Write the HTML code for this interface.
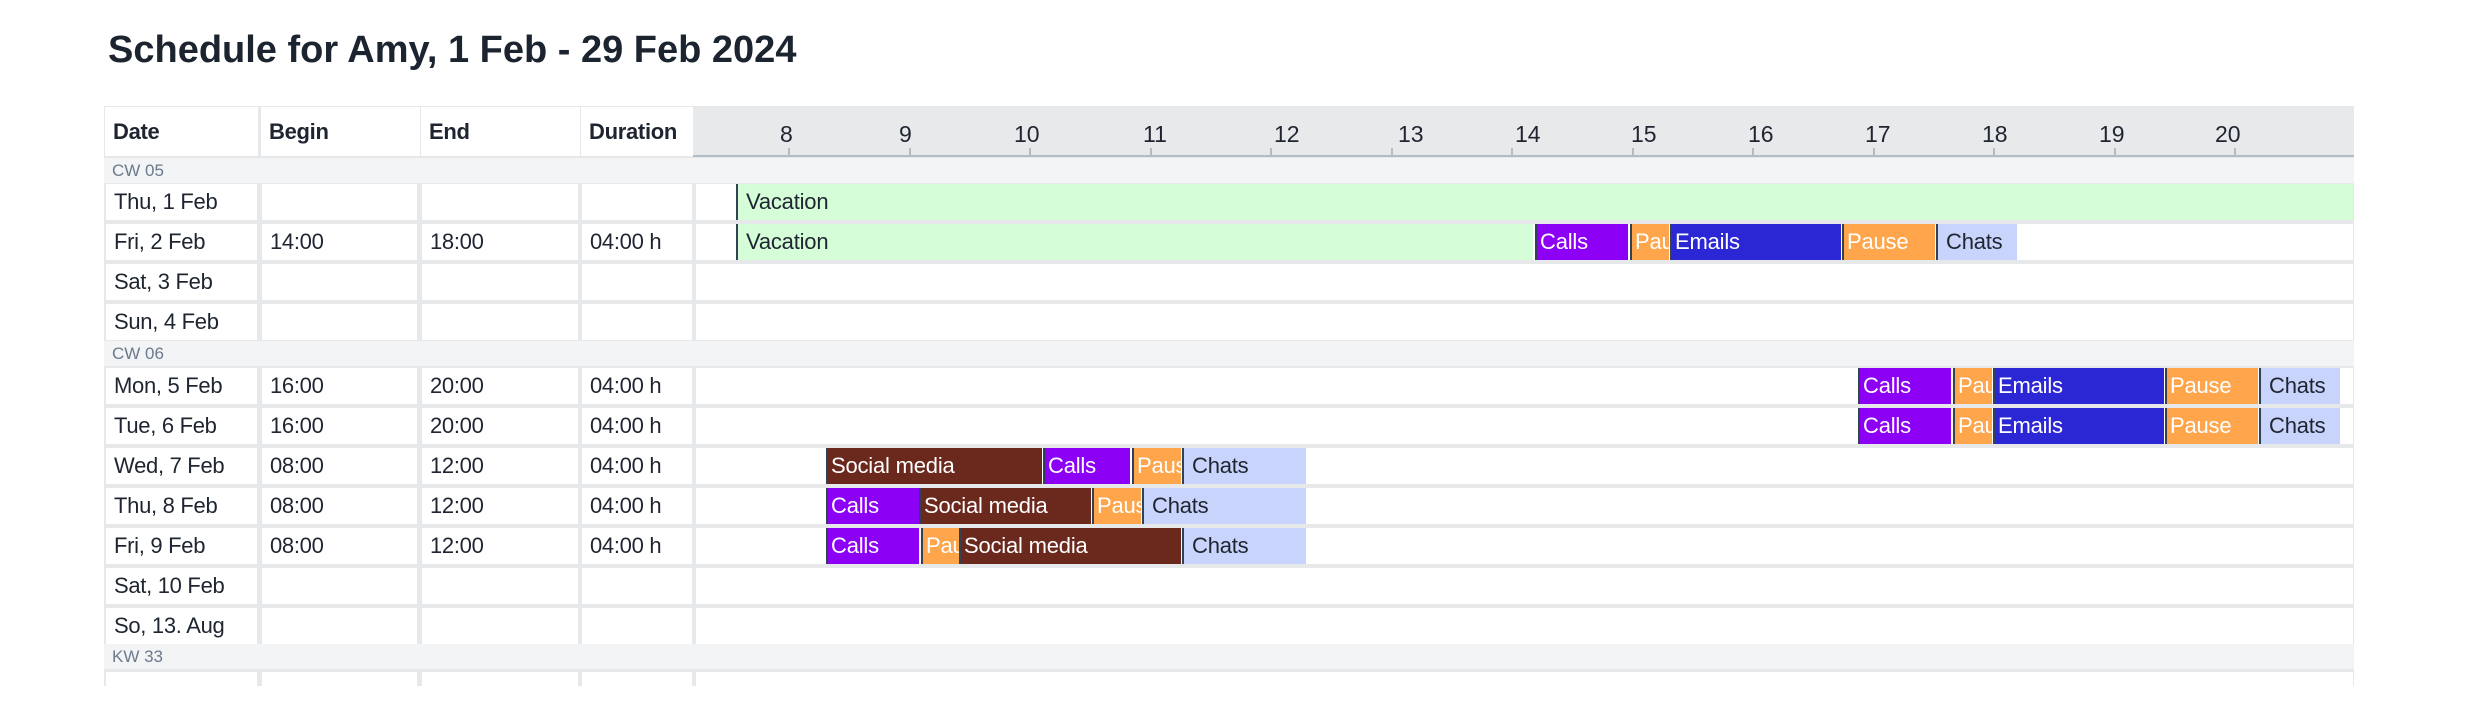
<!DOCTYPE html>
<html><head><meta charset="utf-8"><style>
*{margin:0;padding:0;box-sizing:border-box}
body{width:2466px;height:680px;background:#fff;position:relative;overflow:hidden;font-family:"Liberation Sans",sans-serif;color:#1e2530}
.a{position:absolute}
h1{position:absolute;left:108px;top:29px;font-size:38px;font-weight:bold;color:#1c2430;white-space:nowrap}
.tbl{position:absolute;left:104px;top:106px;width:2250px;height:580px;background:#e7e8ea}
.c{position:absolute;background:#fff;font-size:22px;line-height:36px;padding-left:8px;white-space:nowrap;overflow:hidden;letter-spacing:-0.3px}
.h{font-weight:bold;line-height:50px}
.g{position:absolute;left:104px;width:2250px;height:25px;background:#f3f4f6;color:#6b7a8c;font-size:17px;line-height:25px;padding-left:8px}
.b{position:absolute;height:36px;border-left:2px solid #334155;color:#fff;font-size:22px;line-height:36px;padding-left:3px;white-space:nowrap;overflow:hidden;letter-spacing:-0.2px}
.ca{background:#8c00f5}.pa{background:#ffa64d}.em{background:#2c27d4}.ch{background:#c8d4fb;color:#1e2530;padding-left:8px}.so{background:#6b281d}
.vac{background:#d4fdd8;color:#1e2530;border-left:2px solid #334155;padding-left:8px}
.hr{position:absolute;top:121px;font-size:23px;color:#1e2530;white-space:nowrap}
.tk{position:absolute;top:148px;width:2px;height:9px;background:#b2bcc7}
</style></head><body>
<h1>Schedule for Amy, 1 Feb - 29 Feb 2024</h1>
<div class="tbl"></div>
<!-- header -->
<div class="c h" style="left:105px;top:107px;width:153px;height:49px">Date</div>
<div class="c h" style="left:261px;top:107px;width:159px;height:49px">Begin</div>
<div class="c h" style="left:421px;top:107px;width:159px;height:49px">End</div>
<div class="c h" style="left:581px;top:107px;width:112px;height:49px">Duration</div>
<div class="a" style="left:693px;top:107px;width:1661px;height:48px;background:#e8e9eb"></div>
<div class="a" style="left:693px;top:155px;width:1661px;height:2px;background:#b2bcc7"></div>
<div class="hr" style="left:780px">8</div><div class="tk" style="left:788px"></div>
<div class="hr" style="left:899px">9</div><div class="tk" style="left:909px"></div>
<div class="hr" style="left:1014px">10</div><div class="tk" style="left:1029px"></div>
<div class="hr" style="left:1143px">11</div><div class="tk" style="left:1150px"></div>
<div class="hr" style="left:1274px">12</div><div class="tk" style="left:1270px"></div>
<div class="hr" style="left:1398px">13</div><div class="tk" style="left:1391px"></div>
<div class="hr" style="left:1515px">14</div><div class="tk" style="left:1511px"></div>
<div class="hr" style="left:1631px">15</div><div class="tk" style="left:1632px"></div>
<div class="hr" style="left:1748px">16</div><div class="tk" style="left:1752px"></div>
<div class="hr" style="left:1865px">17</div><div class="tk" style="left:1873px"></div>
<div class="hr" style="left:1982px">18</div><div class="tk" style="left:1993px"></div>
<div class="hr" style="left:2099px">19</div><div class="tk" style="left:2114px"></div>
<div class="hr" style="left:2215px">20</div><div class="tk" style="left:2234px"></div>

<div class="g" style="top:158px">CW 05</div>
<div class="g" style="top:341px">CW 06</div>
<div class="g" style="top:644px">KW 33</div>

<!-- rows -->
<div class="c" style="left:106px;top:184px;width:151px;height:36px">Thu, 1 Feb</div><div class="c" style="left:262px;top:184px;width:155px;height:36px"></div><div class="c" style="left:422px;top:184px;width:156px;height:36px"></div><div class="c" style="left:582px;top:184px;width:110px;height:36px"></div><div class="c" style="left:696px;top:184px;width:1657px;height:36px"></div>
<div class="c" style="left:106px;top:224px;width:151px;height:36px">Fri, 2 Feb</div><div class="c" style="left:262px;top:224px;width:155px;height:36px">14:00</div><div class="c" style="left:422px;top:224px;width:156px;height:36px">18:00</div><div class="c" style="left:582px;top:224px;width:110px;height:36px">04:00 h</div><div class="c" style="left:696px;top:224px;width:1657px;height:36px"></div>
<div class="c" style="left:106px;top:264px;width:151px;height:36px">Sat, 3 Feb</div><div class="c" style="left:262px;top:264px;width:155px;height:36px"></div><div class="c" style="left:422px;top:264px;width:156px;height:36px"></div><div class="c" style="left:582px;top:264px;width:110px;height:36px"></div><div class="c" style="left:696px;top:264px;width:1657px;height:36px"></div>
<div class="c" style="left:106px;top:304px;width:151px;height:36px">Sun, 4 Feb</div><div class="c" style="left:262px;top:304px;width:155px;height:36px"></div><div class="c" style="left:422px;top:304px;width:156px;height:36px"></div><div class="c" style="left:582px;top:304px;width:110px;height:36px"></div><div class="c" style="left:696px;top:304px;width:1657px;height:36px"></div>

<div class="c" style="left:106px;top:368px;width:151px;height:36px">Mon, 5 Feb</div><div class="c" style="left:262px;top:368px;width:155px;height:36px">16:00</div><div class="c" style="left:422px;top:368px;width:156px;height:36px">20:00</div><div class="c" style="left:582px;top:368px;width:110px;height:36px">04:00 h</div><div class="c" style="left:696px;top:368px;width:1657px;height:36px"></div>
<div class="c" style="left:106px;top:408px;width:151px;height:36px">Tue, 6 Feb</div><div class="c" style="left:262px;top:408px;width:155px;height:36px">16:00</div><div class="c" style="left:422px;top:408px;width:156px;height:36px">20:00</div><div class="c" style="left:582px;top:408px;width:110px;height:36px">04:00 h</div><div class="c" style="left:696px;top:408px;width:1657px;height:36px"></div>
<div class="c" style="left:106px;top:448px;width:151px;height:36px">Wed, 7 Feb</div><div class="c" style="left:262px;top:448px;width:155px;height:36px">08:00</div><div class="c" style="left:422px;top:448px;width:156px;height:36px">12:00</div><div class="c" style="left:582px;top:448px;width:110px;height:36px">04:00 h</div><div class="c" style="left:696px;top:448px;width:1657px;height:36px"></div>
<div class="c" style="left:106px;top:488px;width:151px;height:36px">Thu, 8 Feb</div><div class="c" style="left:262px;top:488px;width:155px;height:36px">08:00</div><div class="c" style="left:422px;top:488px;width:156px;height:36px">12:00</div><div class="c" style="left:582px;top:488px;width:110px;height:36px">04:00 h</div><div class="c" style="left:696px;top:488px;width:1657px;height:36px"></div>
<div class="c" style="left:106px;top:528px;width:151px;height:36px">Fri, 9 Feb</div><div class="c" style="left:262px;top:528px;width:155px;height:36px">08:00</div><div class="c" style="left:422px;top:528px;width:156px;height:36px">12:00</div><div class="c" style="left:582px;top:528px;width:110px;height:36px">04:00 h</div><div class="c" style="left:696px;top:528px;width:1657px;height:36px"></div>
<div class="c" style="left:106px;top:568px;width:151px;height:36px">Sat, 10 Feb</div><div class="c" style="left:262px;top:568px;width:155px;height:36px"></div><div class="c" style="left:422px;top:568px;width:156px;height:36px"></div><div class="c" style="left:582px;top:568px;width:110px;height:36px"></div><div class="c" style="left:696px;top:568px;width:1657px;height:36px"></div>
<div class="c" style="left:106px;top:608px;width:151px;height:36px">So, 13. Aug</div><div class="c" style="left:262px;top:608px;width:155px;height:36px"></div><div class="c" style="left:422px;top:608px;width:156px;height:36px"></div><div class="c" style="left:582px;top:608px;width:110px;height:36px"></div><div class="c" style="left:696px;top:608px;width:1657px;height:36px"></div>
<div class="c" style="left:106px;top:672px;width:151px;height:36px"></div><div class="c" style="left:262px;top:672px;width:155px;height:36px"></div><div class="c" style="left:422px;top:672px;width:156px;height:36px"></div><div class="c" style="left:582px;top:672px;width:110px;height:36px"></div><div class="c" style="left:696px;top:672px;width:1657px;height:36px"></div>

<!-- bars -->
<div class="b vac" style="left:736px;top:184px;width:1617px">Vacation</div>
<div class="b vac" style="left:736px;top:224px;width:1617px">Vacation</div>
<div class="a" style="left:1533px;top:224px;width:820px;height:36px;background:#fff"></div>
<div class="b ca" style="left:1535px;top:224px;width:93px">Calls</div>
<div class="b pa" style="left:1630px;top:224px;width:39px">Pause</div>
<div class="b em" style="left:1670px;top:224px;width:171px">Emails</div>
<div class="b pa" style="left:1842px;top:224px;width:93px">Pause</div>
<div class="b ch" style="left:1936px;top:224px;width:81px">Chats</div>

<div class="b ca" style="left:1858px;top:368px;width:93px">Calls</div>
<div class="b pa" style="left:1953px;top:368px;width:39px">Pause</div>
<div class="b em" style="left:1993px;top:368px;width:171px">Emails</div>
<div class="b pa" style="left:2165px;top:368px;width:93px">Pause</div>
<div class="b ch" style="left:2259px;top:368px;width:81px">Chats</div>
<div class="b ca" style="left:1858px;top:408px;width:93px">Calls</div>
<div class="b pa" style="left:1953px;top:408px;width:39px">Pause</div>
<div class="b em" style="left:1993px;top:408px;width:171px">Emails</div>
<div class="b pa" style="left:2165px;top:408px;width:93px">Pause</div>
<div class="b ch" style="left:2259px;top:408px;width:81px">Chats</div>

<div class="b so" style="left:826px;top:448px;width:216px">Social media</div>
<div class="b ca" style="left:1043px;top:448px;width:87px">Calls</div>
<div class="b pa" style="left:1132px;top:448px;width:49px">Pause</div>
<div class="b ch" style="left:1182px;top:448px;width:124px">Chats</div>

<div class="b ca" style="left:826px;top:488px;width:93px">Calls</div>
<div class="b so" style="left:919px;top:488px;width:172px">Social media</div>
<div class="b pa" style="left:1092px;top:488px;width:49px">Pause</div>
<div class="b ch" style="left:1142px;top:488px;width:164px">Chats</div>

<div class="b ca" style="left:826px;top:528px;width:93px">Calls</div>
<div class="b pa" style="left:921px;top:528px;width:38px">Pause</div>
<div class="b so" style="left:959px;top:528px;width:222px">Social media</div>
<div class="b ch" style="left:1182px;top:528px;width:124px">Chats</div>
</body></html>
